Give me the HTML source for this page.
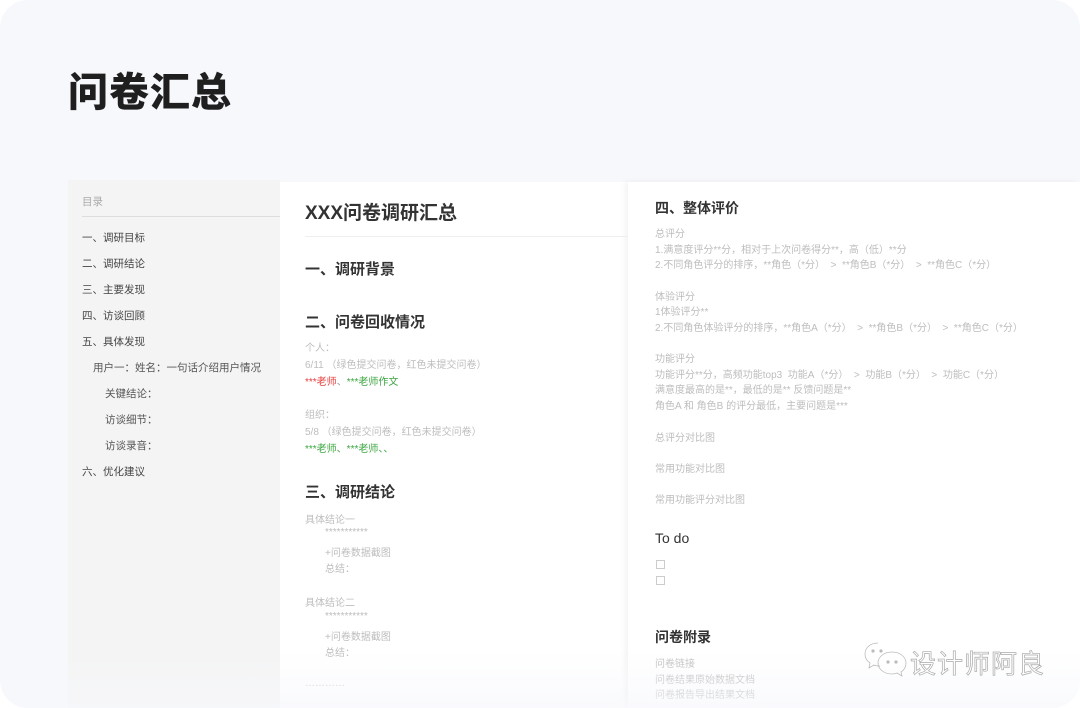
<!DOCTYPE html>
<html><head><meta charset="utf-8"><style>
*{margin:0;padding:0;box-sizing:border-box}
body{width:1080px;height:708px;overflow:hidden;background:#fff;font-family:"Liberation Sans","Noto Sans CJK SC",sans-serif}
.frame{position:absolute;left:0;top:0;width:1080px;height:708px;background:#f7f8fc;border-radius:28px;overflow:hidden}
h1{position:absolute;left:68px;top:60px;font-size:40px;font-weight:900;color:#1f1f1f;letter-spacing:1px}
.side{position:absolute;left:68px;top:180px;width:212px;height:528px;background:#f4f4f4}
.mid{position:absolute;left:280px;top:182px;width:348px;height:526px;background:#fff}
.right{position:absolute;left:628px;top:182px;width:452px;height:526px;background:#fff;box-shadow:-3px 0 6px rgba(0,0,0,0.05)}
.t{position:absolute;white-space:nowrap}
.s{font-size:10.5px;color:#444}
.g{font-size:10px;color:#bdbdbd}
.h{font-size:15px;font-weight:700;color:#333}
.fade{position:absolute;left:0;top:650px;width:1080px;height:58px;background:linear-gradient(rgba(255,255,255,0),rgba(247,248,252,0.7))}
.cb{position:absolute;width:9px;height:9px;border:1px solid #ccc}
.wrap{position:absolute;left:0;top:-2px;width:1080px;height:708px}
</style></head><body><div class="frame">
<h1>问卷汇总</h1>
<div class="side"></div>
<div class="mid"></div>
<div class="right"></div>
<div class="wrap">
<div class="t g" style="left:82px;top:196px;font-size:10.5px;color:#aaa">目录</div>
<div style="position:absolute;left:82px;top:218px;width:198px;height:1px;background:#ddd"></div>
<div class="t s" style="left:82px;top:232px">一、调研目标</div>
<div class="t s" style="left:82px;top:258px">二、调研结论</div>
<div class="t s" style="left:82px;top:284px">三、主要发现</div>
<div class="t s" style="left:82px;top:310px">四、访谈回顾</div>
<div class="t s" style="left:82px;top:336px">五、具体发现</div>
<div class="t s" style="left:93px;top:362px;color:#555">用户一：姓名：一句话介绍用户情况</div>
<div class="t s" style="left:105px;top:388px;color:#555">关键结论：</div>
<div class="t s" style="left:105px;top:414px;color:#555">访谈细节：</div>
<div class="t s" style="left:105px;top:440px;color:#555">访谈录音：</div>
<div class="t s" style="left:82px;top:466px">六、优化建议</div>

<div class="t" style="left:305px;top:200px;font-size:19px;font-weight:700;color:#333">XXX问卷调研汇总</div>
<div style="position:absolute;left:305px;top:238px;width:323px;height:1px;background:#eee"></div>
<div class="t h" style="left:305px;top:260px">一、调研背景</div>
<div class="t h" style="left:305px;top:313px">二、问卷回收情况</div>
<div class="t g" style="left:305px;top:341px">个人：</div>
<div class="t g" style="left:305px;top:358px">6/11 （绿色提交问卷，红色未提交问卷）</div>
<div class="t g" style="left:305px;top:375px"><span style="color:#e83c3c">***老师</span><span style="color:#999">、</span><span style="color:#3ba640">***老师作文</span></div>
<div class="t g" style="left:305px;top:408px">组织：</div>
<div class="t g" style="left:305px;top:425px">5/8 （绿色提交问卷，红色未提交问卷）</div>
<div class="t g" style="left:305px;top:442px;color:#3ba640">***老师、***老师、、</div>
<div class="t h" style="left:305px;top:483px">三、调研结论</div>
<div class="t g" style="left:305px;top:513px">具体结论一</div>
<div class="t g" style="left:325px;top:529px">***********</div>
<div class="t g" style="left:325px;top:546px">+问卷数据截图</div>
<div class="t g" style="left:325px;top:562px">总结：</div>
<div class="t g" style="left:305px;top:596px">具体结论二</div>
<div class="t g" style="left:325px;top:613px">***********</div>
<div class="t g" style="left:325px;top:630px">+问卷数据截图</div>
<div class="t g" style="left:325px;top:646px">总结：</div>
<div class="t g" style="left:305px;top:680px">…………</div>

<div class="t h" style="left:655px;top:200px;font-size:14px">四、整体评价</div>
<div class="t g" style="left:655px;top:227px">总评分</div>
<div class="t g" style="left:655px;top:243px">1.满意度评分**分，相对于上次问卷得分**，高（低）**分</div>
<div class="t g" style="left:655px;top:258px">2.不同角色评分的排序，**角色（*分） &nbsp;&gt;&nbsp; **角色B（*分） &nbsp;&gt;&nbsp; **角色C（*分）</div>
<div class="t g" style="left:655px;top:290px">体验评分</div>
<div class="t g" style="left:655px;top:305px">1体验评分**</div>
<div class="t g" style="left:655px;top:321px">2.不同角色体验评分的排序，**角色A（*分） &nbsp;&gt;&nbsp; **角色B（*分） &nbsp;&gt;&nbsp; **角色C（*分）</div>
<div class="t g" style="left:655px;top:352px">功能评分</div>
<div class="t g" style="left:655px;top:368px">功能评分**分，高频功能top3 &nbsp;功能A（*分） &nbsp;&gt;&nbsp; 功能B（*分） &nbsp;&gt;&nbsp; 功能C（*分）</div>
<div class="t g" style="left:655px;top:383px">满意度最高的是**，最低的是** 反馈问题是**</div>
<div class="t g" style="left:655px;top:399px">角色A 和 角色B 的评分最低，主要问题是***</div>
<div class="t g" style="left:655px;top:431px">总评分对比图</div>
<div class="t g" style="left:655px;top:462px">常用功能对比图</div>
<div class="t g" style="left:655px;top:493px">常用功能评分对比图</div>
<div class="t" style="left:655px;top:532px;font-size:14px;color:#333">To do</div>
<div class="cb" style="left:656px;top:562px"></div>
<div class="cb" style="left:656px;top:578px"></div>
<div class="t h" style="left:655px;top:629px;font-size:14px">问卷附录</div>
<div class="t g" style="left:655px;top:657px">问卷链接</div>
<div class="t g" style="left:655px;top:673px">问卷结果原始数据文档</div>
<div class="t g" style="left:655px;top:688px">问卷报告导出结果文档</div>
</div>
<div class="fade"></div>
<svg style="position:absolute;left:862px;top:640px" width="48" height="40" viewBox="0 0 48 40"><g fill="none" stroke="#fff" stroke-width="2.2"><path d="M16 3C8 3 3 8 3 14c0 4 2 7 5 9l-1 5 5-3c2 1 4 1 6 1"/><path d="M30 12c-8 0-14 5-14 11s6 11 14 11c2 0 3 0 5-1l5 3-1-4c3-2 5-5 5-9 0-6-6-11-14-11z"/></g><g fill="none" stroke="#bbb" stroke-width="0.8"><path d="M16 3C8 3 3 8 3 14c0 4 2 7 5 9l-1 5 5-3c2 1 4 1 6 1"/><path d="M30 12c-8 0-14 5-14 11s6 11 14 11c2 0 3 0 5-1l5 3-1-4c3-2 5-5 5-9 0-6-6-11-14-11z"/></g><circle cx="11" cy="11" r="1.6" fill="#bbb"/><circle cx="19" cy="11" r="1.6" fill="#bbb"/><circle cx="26" cy="22" r="1.6" fill="#bbb"/><circle cx="34" cy="22" r="1.6" fill="#bbb"/></svg>
<div class="t" style="left:910px;top:644px;font-size:26px;color:#fff;-webkit-text-stroke:0.7px #aaa;letter-spacing:1px">设计师阿良</div>
</div></body></html>
